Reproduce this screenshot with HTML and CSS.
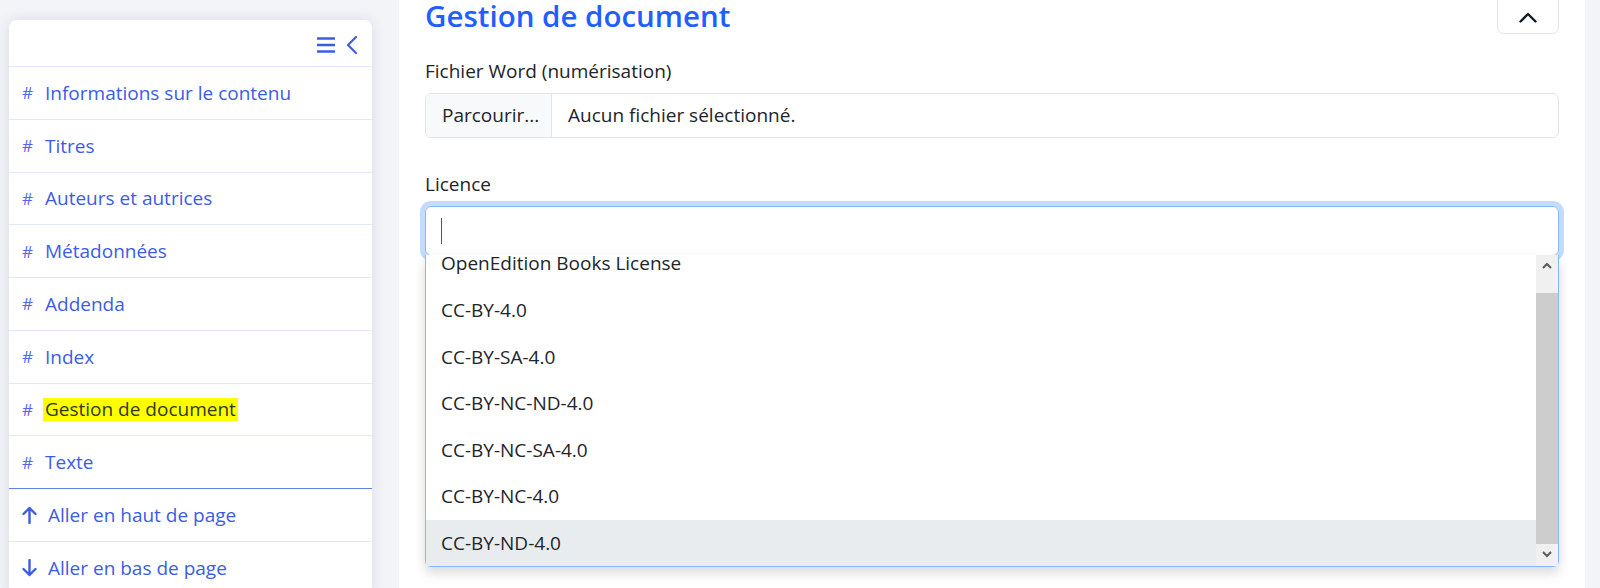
FILE: index.html
```html
<!DOCTYPE html>
<html lang="fr">
<head>
<meta charset="utf-8">
<title>Gestion de document</title>
<link rel="stylesheet" href="styles.css">
</head>
<body>
<div class="layout">
  <aside class="toc">
    <div class="toc-head">
      <svg class="icon-menu" width="18" height="16" viewBox="0 0 18 16"><path d="M0 1.5H18M0 8H18M0 14.5H18" stroke="currentColor" stroke-width="2.4" fill="none"/></svg>
      <svg class="icon-chev-left" width="11" height="18" viewBox="0 0 11 18"><path d="M10 1L2 9L10 17" stroke="currentColor" stroke-width="2.2" fill="none" stroke-linecap="round" stroke-linejoin="round"/></svg>
    </div>
    <ul class="toc-list">
      <li class="toc-item"><span class="hash">#</span><span>Informations sur le contenu</span></li>
      <li class="toc-item"><span class="hash">#</span><span>Titres</span></li>
      <li class="toc-item"><span class="hash">#</span><span>Auteurs et autrices</span></li>
      <li class="toc-item"><span class="hash">#</span><span>Métadonnées</span></li>
      <li class="toc-item"><span class="hash">#</span><span>Addenda</span></li>
      <li class="toc-item"><span class="hash">#</span><span>Index</span></li>
      <li class="toc-item"><span class="hash">#</span><mark class="hl">Gestion de document</mark></li>
      <li class="toc-item toc-item-end"><span class="hash">#</span><span>Texte</span></li>
      <li class="toc-item toc-nav"><svg class="arrow" width="15" height="18" viewBox="0 0 15 18"><path d="M7.5 17V2M1.5 8L7.5 2L13.5 8" stroke="currentColor" stroke-width="2.4" fill="none" stroke-linecap="round" stroke-linejoin="round"/></svg><span>Aller en haut de page</span></li>
      <li class="toc-item toc-nav"><svg class="arrow" width="15" height="18" viewBox="0 0 15 18"><path d="M7.5 1V16M1.5 10L7.5 16L13.5 10" stroke="currentColor" stroke-width="2.4" fill="none" stroke-linecap="round" stroke-linejoin="round"/></svg><span>Aller en bas de page</span></li>
    </ul>
  </aside>

  <main class="panel">
    <div class="panel-head">
      <h2 class="panel-title">Gestion de document</h2>
      <button class="collapse-btn" type="button"><svg width="18" height="11" viewBox="0 0 18 11"><path d="M1.5 9.5L9 2L16.5 9.5" stroke="currentColor" stroke-width="2.4" fill="none" stroke-linecap="round" stroke-linejoin="round"/></svg></button>
    </div>

    <div class="field field-first">
      <label class="field-label">Fichier Word (numérisation)</label>
      <div class="file-input">
        <span class="file-btn">Parcourir...</span>
        <span class="file-name">Aucun fichier sélectionné.</span>
      </div>
    </div>

    <div class="field">
      <label class="field-label">Licence</label>
      <div class="select-wrap">
        <div class="select-control"><span class="caret"></span></div>
        <div class="dropdown">
          <div class="options">
            <div class="options-inner">
              <div class="option">OpenEdition Books License</div>
              <div class="option">CC-BY-4.0</div>
              <div class="option">CC-BY-SA-4.0</div>
              <div class="option">CC-BY-NC-ND-4.0</div>
              <div class="option">CC-BY-NC-SA-4.0</div>
              <div class="option">CC-BY-NC-4.0</div>
              <div class="option option-active">CC-BY-ND-4.0</div>
            </div>
          </div>
          <div class="scrollbar">
            <div class="sb-btn"><svg width="10" height="7" viewBox="0 0 10 7"><path d="M1 6L5 2L9 6" stroke="#5a5a5a" stroke-width="2" fill="none"/></svg></div>
            <div class="sb-track-top"></div>
            <div class="sb-thumb"></div>
            <div class="sb-btn"><svg width="10" height="7" viewBox="0 0 10 7"><path d="M1 1L5 5L9 1" stroke="#5a5a5a" stroke-width="2" fill="none"/></svg></div>
          </div>
        </div>
      </div>
    </div>
  </main>
</div>
</body>
</html>
```

FILE: styles.css
```css
* { box-sizing: border-box; }

html, body {
  margin: 0;
  padding: 0;
}

body {
  background: #f3f4f8;
  font-family: "Open Sans", "Noto Sans", sans-serif;
  font-size: 19px;
  color: #212529;
  overflow: hidden;
}

.layout {
  display: flex;
  align-items: stretch;
  height: 588px;
  overflow: hidden;
}

/* ---------- Sidebar ---------- */
.toc {
  flex: 0 0 363px;
  margin: 20px 27px 0 9px;
  background: #fff;
  border-radius: 8px 8px 0 0;
  box-shadow: 0 0 14px rgba(30, 40, 80, 0.12);
  color: #3d5ce6;
  align-self: flex-start;
}

.toc-head {
  height: 47px;
  display: flex;
  align-items: center;
  justify-content: flex-end;
  gap: 11px;
  padding: 3px 15px 0 0;
  border-bottom: 1px solid #e2e8fb;
}

.toc-list {
  list-style: none;
  margin: 0;
  padding: 0;
}

.toc-item {
  height: 52.78px;
  display: flex;
  align-items: center;
  padding-left: 13px;
  border-bottom: 1px solid #e2e8fb;
  white-space: nowrap;
}

.toc-item-end {
  border-bottom-color: #6380e6;
}

.hash {
  width: 23px;
  flex: 0 0 23px;
  color: #5565ee;
  font-size: 17px;
}

.hl {
  background: #ffff00;
  color: #2f3a14;
  padding: 0 2px;
  margin-left: -2px;
  line-height: 23px;
}

.toc-nav .arrow {
  margin-right: 11px;
  flex: 0 0 15px;
}

/* ---------- Main panel ---------- */
.panel {
  flex: 1 1 auto;
  margin-right: 15px;
  background: #fff;
  padding: 0 26px;
}

.panel-head {
  display: flex;
  justify-content: space-between;
  align-items: flex-start;
  margin-top: -12px;
}

.panel-title {
  margin: 12px 0 0;
  font-size: 29.5px;
  font-weight: 600;
  line-height: 1.1;
  color: #1f5eff;
}

.collapse-btn {
  width: 62px;
  height: 46px;
  border: 1px solid #e2e5ea;
  border-radius: 7px;
  background: #fff;
  color: #111827;
  display: flex;
  align-items: center;
  justify-content: center;
  padding: 12px 0 0;
}

.field {
  margin-bottom: 32px;
}

.field-first {
  margin-top: 22.7px;
}

.field-label {
  display: block;
  line-height: 28px;
  margin-bottom: 8px;
}

.file-input {
  display: flex;
  height: 45px;
  border: 1px solid #e2e5ea;
  border-radius: 6px;
  overflow: hidden;
  line-height: 43px;
}

.file-btn {
  flex: 0 0 126px;
  padding-left: 16px;
  background: #f8f9fa;
  border-right: 1px solid #e2e5ea;
  white-space: nowrap;
}

.file-name {
  padding-left: 16px;
}

/* ---------- Select ---------- */
.select-wrap {
  position: relative;
}

.select-control {
  height: 50px;
  border: 1px solid #86b7fe;
  border-radius: 6px;
  box-shadow: 0 0 0 5px #c2dbfe;
  display: flex;
  align-items: center;
  padding-left: 15px;
}

.caret {
  width: 1px;
  height: 26px;
  background: #555;
}

.dropdown {
  position: absolute;
  top: 49px;
  left: 0;
  right: 0;
  display: flex;
  background: #fff;
  border: 1px solid #86b7fe;
  border-top: 0;
  border-radius: 0 0 6px 6px;
  box-shadow: 0 6px 12px rgba(0, 0, 0, 0.15);
  z-index: 5;
}

.options {
  flex: 1 1 auto;
  height: 311px;
  overflow: hidden;
}

.options-inner {
  margin-top: -15px;
}

.option {
  height: 46.67px;
  padding: 1.5px 0 0 15px;
  line-height: 45px;
  white-space: nowrap;
}

.option-active {
  background: #e9ecef;
}

.scrollbar {
  flex: 0 0 22px;
  display: flex;
  flex-direction: column;
  background: #f0f0f0;
}

.sb-btn {
  height: 22px;
  display: flex;
  align-items: center;
  justify-content: center;
}

.sb-track-top {
  height: 16px;
}

.sb-thumb {
  height: 251px;
  background: #cdcdcd;
}
```
